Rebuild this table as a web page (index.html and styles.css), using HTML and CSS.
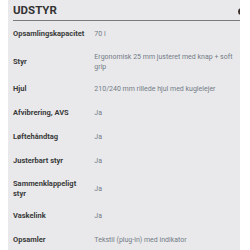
FILE: index.html
```html
<!DOCTYPE html>
<html lang="da">
<head>
  <meta charset="UTF-8" />
  <meta name="viewport" content="width=device-width, initial-scale=1.0"/>
  <title>Udstyr</title>
  <link rel="stylesheet" href="styles.css">
</head>
<body>
  <section class="udstyr">
    <span class="knap"></span>
    <h2>UDSTYR</h2>
    <div class="specs">
      <div class="navn">Opsamlingskapacitet</div><div class="vaerdi">70 l</div>
      <div class="navn">Styr</div><div class="vaerdi">Ergonomisk 25 mm justeret med knap + soft grip</div>
      <div class="navn">Hjul</div><div class="vaerdi">210/240 mm rillede hjul med kuglelejer</div>
      <div class="navn">Afvibrering, AVS</div><div class="vaerdi">Ja</div>
      <div class="navn">Løftehåndtag</div><div class="vaerdi">Ja</div>
      <div class="navn">Justerbart styr</div><div class="vaerdi">Ja</div>
      <div class="navn">Sammenklappeligt styr</div><div class="vaerdi">Ja</div>
      <div class="navn">Vaskelink</div><div class="vaerdi">Ja</div>
      <div class="navn">Opsamler</div><div class="vaerdi">Tekstil (plug-in) med indikator</div>
    </div>
  </section>
</body>
</html>
```

FILE: styles.css
```css
body {
  margin: 0;
  font-family: Roboto, "Liberation Sans", Arial, sans-serif;
  background-color: #fff;
}

.udstyr {
  position: relative;
  margin-left: 8px;
  width: 232px;
  min-height: 250px;
  padding-left: 5px;
  box-sizing: border-box;
  background-color: #e9e9eb;
  overflow: hidden;
}

/* kanten af en rund knap der stikker ind fra højre */
.knap {
  position: absolute;
  top: 8px;
  right: -5px;
  width: 7px;
  height: 7px;
  border-radius: 50%;
  background-color: #3a2f2a;
}

h2 {
  margin: 0;
  padding: 3px 0 3px;
  font-size: 11.5px;
  line-height: 14px;
  font-weight: bold;
  color: #333;
  border-bottom: 1px solid #7a7a7a;
}

.specs {
  display: grid;
  grid-template-columns: min-content 1fr;
  margin-top: 1px;
  font-size: 7.5px;
  line-height: 10px;
}

.navn, .vaerdi {
  display: flex;
  align-items: center;
  min-height: 24px;
  padding: 5.5px 0;
  box-sizing: border-box;
}

.navn {
  font-weight: bold;
  color: #3a3a3a;
  padding-right: 10px;
}

.vaerdi {
  font-size: 7px;
  color: #737b86;
}
```
